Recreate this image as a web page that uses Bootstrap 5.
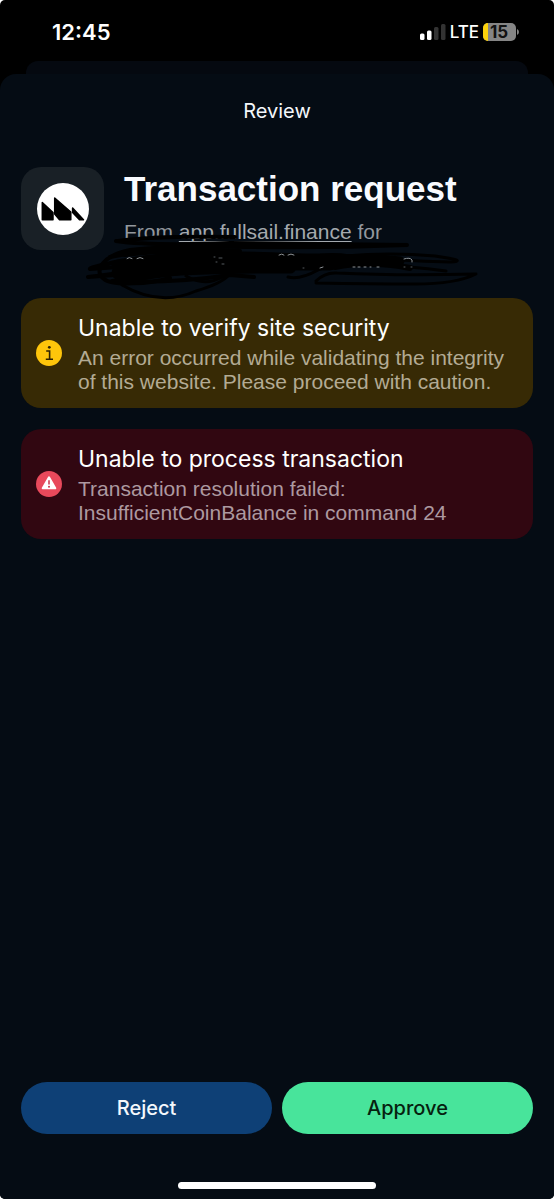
<!DOCTYPE html>
<html lang="en" data-bs-theme="dark">
<head>
<meta charset="utf-8">
<meta name="viewport" content="width=device-width, initial-scale=1">
<title>Transaction request</title>
<link href="https://cdn.jsdelivr.net/npm/bootstrap@5.3.0/dist/css/bootstrap.min.css" rel="stylesheet">
<style>
  body { background: #fff; font-family: Inter, "Liberation Sans", sans-serif; font-size: 20px; line-height: 24px; }
  .screen { background: #000; border-radius: 5px; }
  .status-row { height: 61px; padding: 2px 35px 0 52px; color: #fff; }
  .clock { font-size: 22px; }
  .network { font-size: 17px; }
  .sheet-behind { height: 25px; margin: 0 26px -12px; background: #050910; border-radius: 12px 12px 0 0; }
  .sheet { background: #050c14; border-radius: 16px 16px 0 0; color: #f4f7fb; padding: 0 21px 10px; }
  .sheet-title { padding: 25px 0 44px; }
  .site-tile { width: 83px; height: 83px; background: #192026; border-radius: 20px; }
  .request { gap: 20px; margin-bottom: 21px; }
  .request-name { font-family: "Liberation Sans", sans-serif; font-size: 35px; line-height: 44px; margin: 0 0 6px; color: #f9fbff; }
  .request-from, .notice-text { font-family: "Liberation Sans", sans-serif; }
  .request-from { font-size: 21px; line-height: 30px; min-height: 60px; color: #93989e; }
  .request-from a { color: #a4a9ae; text-underline-offset: 2px; text-decoration-thickness: 1px; text-decoration-skip-ink: none; }
  .scribble { left: 86px; top: 232px; width: 394px; height: 68px; pointer-events: none; }
  .notices { gap: 21px; }
  .notice { border-radius: 20px; padding: 14px 15px; gap: 16px; }
  .notice-name { font-size: 23px; line-height: 32px; margin-bottom: 2px; color: #fff; }
  .notice-text { font-size: 21px; }
  .notice-warn { background: #372a05; color: #b3ab94; }
  .notice-fail { background: #310711; color: #ad99a0; }
  .actions { gap: 10px; margin-bottom: 48px; }
  .actions .btn { height: 52px; font-size: 20px; font-weight: 500; border: 0; }
  .btn-reject { background: #0e4076; color: #f4f8fc; }
  .btn-approve { background: #48e49b; color: #06210f; }
  .home-bar { width: 36%; min-width: 198px; height: 7px; background: #fff; }
</style>
</head>
<body>
<div class="screen position-relative d-flex flex-column min-vh-100 overflow-hidden">
  <header class="status-row d-flex align-items-center justify-content-between">
    <span class="clock fw-semibold">12:45</span>
    <div class="d-flex align-items-center">
      <svg class="me-1" width="26" height="18" viewBox="0 0 26 18" aria-hidden="true">
        <rect x="0" y="10.500" width="4.500" height="6.500" rx="1.500" fill="#fff"/>
        <rect x="7" y="7.500" width="4.500" height="9.500" rx="1.500" fill="#fff"/>
        <rect x="14" y="4" width="4.500" height="13" rx="1.500" fill="#333"/>
        <rect x="21" y="1" width="4.500" height="16" rx="1.500" fill="#333"/>
      </svg>
      <span class="network fw-medium me-1">LTE</span>
      <svg width="36" height="20" viewBox="0 0 36 20" role="img" aria-label="Battery 15 percent">
        <defs><clipPath id="cell"><rect x="0" y="1" width="33" height="18" rx="5"/></clipPath></defs>
        <g clip-path="url(#cell)"><rect width="33" height="20" fill="#858585"/><rect width="5" height="20" fill="#fcd20c"/></g>
        <path d="M34 7q2 1 2 3t-2 3z" fill="#858585"/>
        <text x="16" y="16" text-anchor="middle" font-size="17" font-weight="700" fill="#111">15</text>
      </svg>
    </div>
  </header>
  <div class="sheet-behind"></div>
  <main class="sheet position-relative d-flex flex-column flex-grow-1">
    <div class="sheet-title text-center">Review</div>
    <section class="request d-flex align-items-start">
      <div class="site-tile d-flex align-items-center justify-content-center flex-shrink-0">
        <svg width="52" height="52" viewBox="0 0 52 52" role="img" aria-label="Full Sail">
          <circle cx="26" cy="26" r="26" fill="#fff"/>
          <g fill="#000" stroke="#000" stroke-width="1.500" stroke-linejoin="round">
            <path d="M5.300 19.500L16 29.500V36.800H5.300Z"/>
            <path d="M17.700 15L33.800 29V36.800H22.500L17.700 31Z"/>
            <path d="M35.600 25L46.500 36.800H42.500L35.600 29.500Z"/>
          </g>
        </svg>
      </div>
      <div class="flex-grow-1">
        <h1 class="request-name fw-bold">Transaction request</h1>
        <p class="request-from mb-0">From <a href="#">app.fullsail.finance</a> for</p>
      </div>
    </section>
    <section class="notices d-flex flex-column">
      <div class="notice notice-warn d-flex align-items-center" role="alert">
        <svg class="flex-shrink-0" width="26" height="26" viewBox="0 0 26 26" aria-hidden="true">
          <circle cx="13" cy="13" r="13" fill="#fec50b"/>
          <circle cx="13.300" cy="7.300" r="1.400" fill="#2c2103"/>
          <path d="M10.200 11H13.600V19.300M9.800 19.300H17" fill="none" stroke="#2c2103" stroke-width="1.600"/>
        </svg>
        <div>
          <h2 class="notice-name fw-normal">Unable to verify site security</h2>
          <p class="notice-text mb-0">An error occurred while validating the integrity of this website. Please proceed with caution.</p>
        </div>
      </div>
      <div class="notice notice-fail d-flex align-items-center" role="alert">
        <svg class="flex-shrink-0" width="26" height="26" viewBox="0 0 26 26" aria-hidden="true">
          <circle cx="13" cy="13" r="13" fill="#e8495b"/>
          <path d="M13 6.300L19.300 17.300H6.700Z" fill="#fff" stroke="#fff" stroke-width="2" stroke-linejoin="round"/>
          <path d="M13 9.300V13.500" stroke="#c83448" stroke-width="1.500"/>
          <circle cx="13" cy="15.700" r="1" fill="#c83448"/>
        </svg>
        <div>
          <h2 class="notice-name fw-normal">Unable to process transaction</h2>
          <p class="notice-text mb-0">Transaction resolution failed:<br>InsufficientCoinBalance in command 24</p>
        </div>
      </div>
    </section>
    <div class="actions d-flex mt-auto">
      <button type="button" class="btn btn-reject rounded-pill flex-fill w-50">Reject</button>
      <button type="button" class="btn btn-approve rounded-pill flex-fill w-50">Approve</button>
    </div>
    <div class="home-bar rounded-pill mx-auto"></div>
  </main>
  <svg class="scribble position-absolute" viewBox="86 232 394 68" fill="none" stroke="#000" stroke-width="3" stroke-linecap="round" stroke-linejoin="round" aria-hidden="true">
    <path stroke-width="4" d="M118 241C145 237 180 236 235 237M116 241Q150 246 230 243Q330 244 407 245Q330 248 250 247Q170 245 130 250C105 255 92 270 104 279C112 286 150 284 170 278"/>
    <path stroke-width="4" d="M110 257Q160 247 240 251Q200 258 115 262Q88 268 90 269Q130 266 190 264Q130 272 88 277Q150 272 200 270Q150 278 112 281Q170 284 230 275L254 277"/>
    <path d="M122 285Q160 307 196 291Q220 284 228 276M186 276Q205 287 222 277"/>
    <path d="M118 266Q190 252 330 262M118 273Q200 266 290 267" stroke-width="13"/>
    <path d="M125 254Q170 248 215 253" stroke-width="6"/>
    <path d="M215 262H330" stroke-width="17"/>
    <path d="M290 267L345 256Q390 252 435 256Q470 261 450 262Q400 261 350 256Q325 252 305 259M288 277Q300 280 318 270Q340 259 370 265Q410 266 446 271M316 281Q325 272 337 273Q400 276 476 274Q456 284 415 284Q370 284 316 283"/>
    <path d="M325 262Q360 256 400 261" stroke-width="9"/>
    <path d="M335 267Q370 260 410 268" stroke-width="6"/>
    <g stroke="#8d9296" stroke-width="1">
      <path d="M127 258.500q2-2 5 0M137 258.500q3-2 6 0M279 255q3-2 5 0M288 255q3-2 6 0M320 268l3-1M353 267h2m3 0h2m4 0h2m4 0h1m6 0h2M404 259q6-2 8 1v2"/>
      <path stroke="#555a5e" d="M214 257h1M219 258h3M216 262h1M222 264h2M303 268h1M404 267h1m6 0h1"/>
    </g>
  </svg>
</div>
<script src="https://cdn.jsdelivr.net/npm/bootstrap@5.3.0/dist/js/bootstrap.bundle.min.js"></script>
</body>
</html>
